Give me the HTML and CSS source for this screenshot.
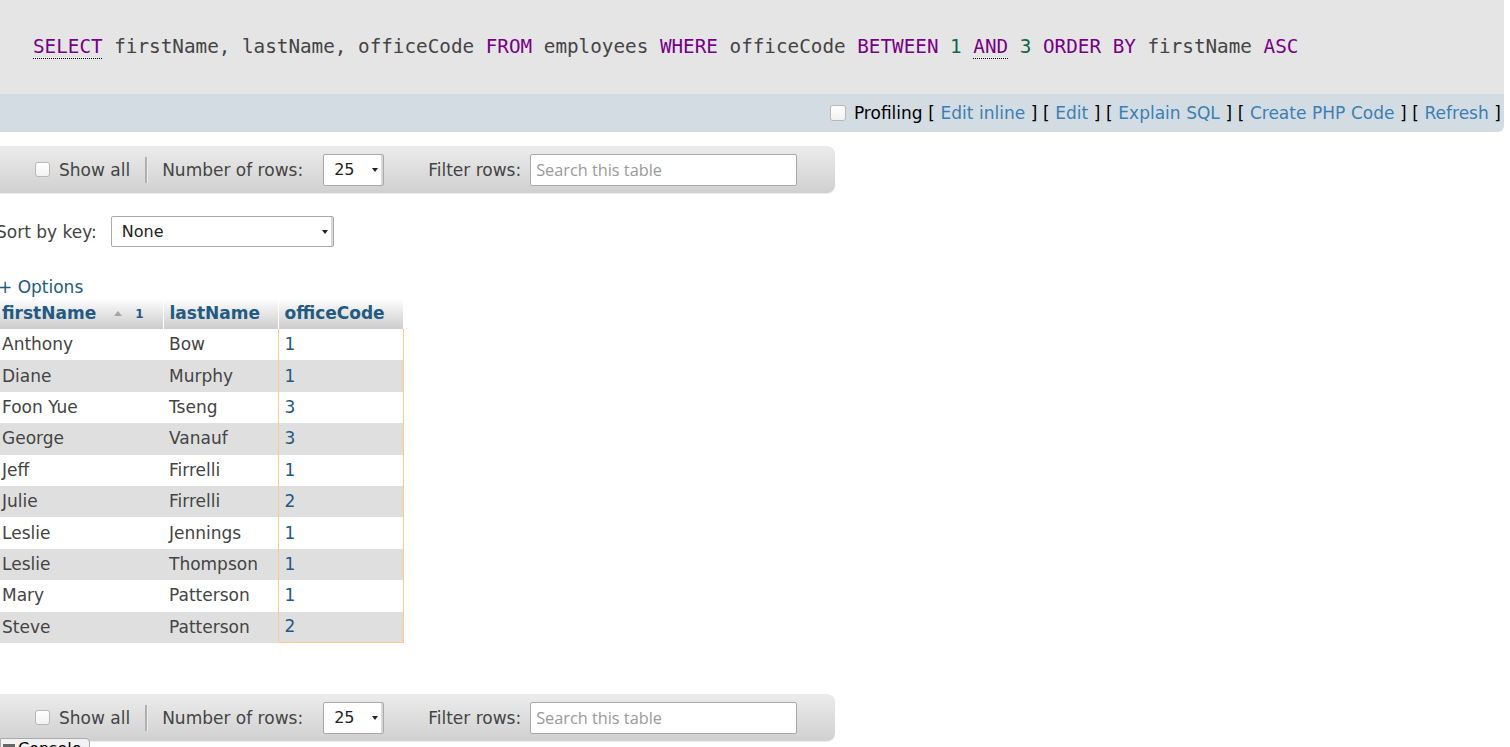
FILE: index.html
```html
<!DOCTYPE html>
<html>
<head>
<meta charset="utf-8">
<link rel="stylesheet" href="styles.css">
</head>
<body>
<div class="sqlbox">
  <code class="sql"><span class="kw doc">SELECT</span> firstName, lastName, officeCode <span class="kw">FROM</span> employees <span class="kw">WHERE</span> officeCode <span class="kw">BETWEEN</span> <span class="num">1</span> <span class="kw doc">AND</span> <span class="num">3</span> <span class="kw">ORDER</span> <span class="kw">BY</span> firstName <span class="kw">ASC</span></code>
</div>
<div class="toolbar">
  <span class="cb"></span>
  <span class="links"><span class="prof">Profiling</span> <span class="br">[</span> <a class="tl">Edit inline</a> <span class="br">]</span> <span class="br">[</span> <a class="tl">Edit</a> <span class="br">]</span> <span class="br">[</span> <a class="tl">Explain SQL</a> <span class="br">]</span> <span class="br">[</span> <a class="tl">Create PHP Code</a> <span class="br">]</span> <span class="br">[</span> <a class="tl">Refresh</a> <span class="br">]</span></span>
</div>

<div class="navbar first">
  <span class="cb"></span><span class="lbl">Show all</span>
  <span class="sep"></span>
  <span class="lbl">Number of rows:</span>
  <span class="sel small"><span class="val">25</span><span class="arrow"></span></span>
  <span class="lbl filter">Filter rows:</span>
  <span class="search">Search this table</span>
</div>

<div class="content">
  <div class="sortrow">
    <span class="lbl">Sort by key:</span>
    <span class="sel wide"><span class="val">None</span><span class="arrow"></span></span>
  </div>
  <div class="options">+ Options</div>
  <table class="data">
    <thead>
      <tr>
        <th class="c1"><span class="hl">firstName</span><span class="sorticon"></span><span class="sortnum">1</span></th>
        <th class="c2"><span class="hl">lastName</span></th>
        <th class="c3"><span class="hl">officeCode</span></th>
      </tr>
    </thead>
    <tbody>
      <tr><td>Anthony</td><td>Bow</td><td class="cond">1</td></tr>
      <tr><td>Diane</td><td>Murphy</td><td class="cond">1</td></tr>
      <tr><td>Foon Yue</td><td>Tseng</td><td class="cond">3</td></tr>
      <tr><td>George</td><td>Vanauf</td><td class="cond">3</td></tr>
      <tr><td>Jeff</td><td>Firrelli</td><td class="cond">1</td></tr>
      <tr><td>Julie</td><td>Firrelli</td><td class="cond">2</td></tr>
      <tr><td>Leslie</td><td>Jennings</td><td class="cond">1</td></tr>
      <tr><td>Leslie</td><td>Thompson</td><td class="cond">1</td></tr>
      <tr><td>Mary</td><td>Patterson</td><td class="cond">1</td></tr>
      <tr><td>Steve</td><td>Patterson</td><td class="cond">2</td></tr>
    </tbody>
  </table>
</div>

<div class="navbar second">
  <span class="cb"></span><span class="lbl">Show all</span>
  <span class="sep"></span>
  <span class="lbl">Number of rows:</span>
  <span class="sel small"><span class="val">25</span><span class="arrow"></span></span>
  <span class="lbl filter">Filter rows:</span>
  <span class="search">Search this table</span>
</div>

<div class="console"><span class="cicon"></span>Console</div>
</body>
</html>
```

FILE: styles.css
```css
html, body {
  margin: 0;
  padding: 0;
  background: #fff;
  overflow: hidden;
}
body {
  font-family: "DejaVu Sans", sans-serif;
  font-size: 17px;
  color: #444;
  width: 1510px;
  height: 747px;
  position: relative;
}

.sqlbox {
  width: 1504px;
  height: 94px;
  background: #e5e5e5;
  display: flex;
  align-items: center;
  box-sizing: border-box;
  padding-left: 33px;
}
.sql {
  font-family: "DejaVu Sans Mono", monospace;
  font-size: 19.3px;
  color: #444;
  white-space: pre;
  margin-top: -1px;
}
.kw { color: #770088; }
.num { color: #116644; }
.doc {
  text-decoration: underline dotted #000;
  text-underline-offset: 5px;
  text-decoration-thickness: 1px;
}

.toolbar {
  width: 1504px;
  height: 38px;
  background: #d3dce3;
  border-bottom-right-radius: 6px;
  display: flex;
  align-items: center;
  justify-content: flex-end;
  box-sizing: border-box;
  padding-right: 3px;
  color: #000;
}
.toolbar .cb { margin-right: 8px; width: 14px; height: 14px; }
.links { white-space: pre; word-spacing: 0.2px; }
.prof { color: #000; }
.br { color: #000; }
.tl { color: #3b7fb4; }

.cb {
  display: inline-block;
  width: 13px;
  height: 13px;
  border: 1px solid #b8b8b8;
  border-radius: 3px;
  background: linear-gradient(#fff, #f2f2f2);
  flex: none;
}

.navbar {
  width: 835px;
  height: 47px;
  box-sizing: border-box;
  background: linear-gradient(#ececec, #d0d0d0);
  border-top-right-radius: 8px;
  border-bottom-right-radius: 8px;
  display: flex;
  align-items: center;
  padding-left: 35px;
  box-shadow: 0 1px 1px rgba(0,0,0,0.08);
}
.navbar.first { margin-top: 14px; }
.navbar.second { margin-top: 51px; }
.navbar .cb { margin-right: 9px; }
.navbar .lbl { color: #444; }
.sep {
  width: 2px;
  height: 26px;
  background: #b0b0b0;
  margin: 0 14px 0 15px;
  border-right: 1px solid #eee;
}

.sel {
  display: inline-flex;
  align-items: center;
  justify-content: space-between;
  height: 32px;
  box-sizing: border-box;
  background: #fff;
  border: 1px solid #aaa;
  border-radius: 2px;
  box-shadow: inset -2px 0 0 #d8d8d8;
  font-size: 16px;
  color: #222;
  padding-left: 10px;
  padding-right: 5px;
}
.sel.small { width: 61px; margin-left: 20px; }
.sel.wide { width: 223px; height: 31px; margin-left: 14px; }
.arrow {
  width: 0;
  height: 0;
  border-left: 3px solid transparent;
  border-right: 3px solid transparent;
  border-top: 4px solid #222;
}
.filter { margin-left: 44px; }
.search {
  margin-left: 9px;
  width: 267px;
  height: 32px;
  box-sizing: border-box;
  background: #fff;
  border: 1px solid #aaa;
  border-radius: 2px;
  font-family: "Open Sans", sans-serif;
  font-size: 16.3px;
  color: #9a9a9a;
  display: flex;
  align-items: center;
  padding-left: 5px;
}

.content { margin-left: -4px; }
.sortrow {
  display: flex;
  align-items: center;
  margin-top: 23px;
  height: 31px;
}
.options {
  color: #235a81;
  margin-top: 27px;
  margin-left: 2px;
  line-height: 26px;
  height: 24px;
}

.data {
  border-collapse: collapse;
  font-size: 17px;
}
.data th {
  height: 31px;
  box-sizing: border-box;
  padding: 0 6px 2px;
  text-align: left;
  font-weight: bold;
  background: linear-gradient(#ffffff, #cccccc);
  border-left: 1px solid #fff;
  white-space: nowrap;
}
.data th.c1 { width: 167px; border-left: none; }
.data th.c2 { width: 115px; }
.data th.c3 { width: 125px; }
.hl { color: #235a81; }
.sorticon {
  display: inline-block;
  width: 0; height: 0;
  border-left: 4px solid transparent;
  border-right: 4px solid transparent;
  border-bottom: 5px solid #a5a5a5;
  margin-left: 18px;
  vertical-align: 3px;
}
.sortnum {
  color: #235a81;
  font-size: 12px;
  font-weight: bold;
  margin-left: 13px;
  vertical-align: 1px;
}
.data td {
  height: 31.4px;
  box-sizing: border-box;
  padding: 0 6px 1px;
  white-space: nowrap;
  color: #444;
}
.data tbody tr:nth-child(even) td { background: #dfdfdf; }
.data td.cond {
  border-left: 1px solid #ffc98f;
  border-right: 1px solid #ffc98f;
  color: #235a81;
}
.data tbody tr:last-child td.cond { border-bottom: 1px solid #ffc98f; }

.console {
  position: absolute;
  left: 0;
  top: 738px;
  width: 90px;
  height: 20px;
  box-sizing: border-box;
  background: #f2f2f2;
  border: 1px solid #aaa;
  border-radius: 0 4px 0 0;
  font-size: 16px;
  color: #000;
  line-height: 20px;
  padding-left: 17px;
}
.cicon {
  position: absolute;
  left: 2px;
  top: 5px;
  width: 12px;
  height: 3px;
  background: #666;
}
```
